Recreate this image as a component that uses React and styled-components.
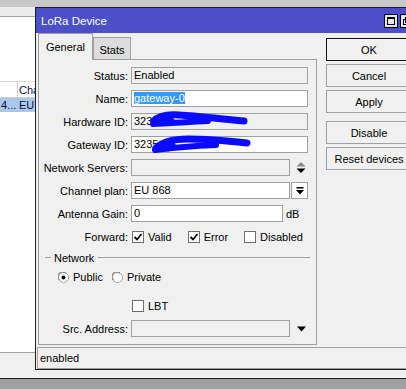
import styled, { createGlobalStyle } from 'styled-components';

const GlobalStyle = createGlobalStyle`
  html, body {
    margin: 0;
    padding: 0;
    background: #a0a0a0;
  }
  body {
    font-family: "Liberation Sans", Arial, sans-serif;
    font-size: 11px;
    color: #000;
  }
`;

/* ---------- background window ---------- */

const Desktop = styled.div`
  position: relative;
  width: 406px;
  height: 389px;
  overflow: hidden;
  display: flex;
  flex-direction: column;
  background: #a0a0a0;
`;

const TopStrip = styled.div`
  height: 7px;
  background: #c8c8c8;
`;

const Toolbar = styled.div`
  height: 9px;
  background: #ececec;
  border-bottom: 1px solid #a0a0a0;
`;

const ListArea = styled.div`
  box-sizing: border-box;
  height: 336px;
  padding-top: 64px;
  background: #fff;
  border-bottom: 1px solid #a0a0a0;
`;

const ListRow = styled.div`
  box-sizing: border-box;
  display: grid;
  grid-template-columns: 18px 1fr;
  height: ${p => (p.$head ? '17px' : '14px')};
  align-items: center;
  background: ${p => (p.$selected ? '#aac8ea' : '#fff')};
  border-top: ${p => (p.$head ? '1px solid #d8d8d8' : 'none')};
  border-bottom: ${p => (p.$head ? '1px solid #d0d0d0' : 'none')};
  color: #101040;
  white-space: nowrap;
  overflow: hidden;
`;

const ListCell = styled.div`
  height: 100%;
  display: flex;
  align-items: center;
  padding-left: ${p => (p.$first ? '0' : '1px')};
  border-right: ${p => (p.$first ? '1px solid #d0d0d0' : 'none')};
  overflow: hidden;
`;

const Footer = styled.div`
  height: 25px;
  background: #f0f0f0;
  border-bottom: 1px solid #222;
`;

/* ---------- dialog ---------- */

const Dialog = styled.div`
  position: absolute;
  left: 35px;
  top: 7px;
  width: 381px;
  height: 363px;
  box-sizing: border-box;
  border: 1px solid #1e1e1e;
  background: #f0f0f0;
  display: flex;
  flex-direction: column;
`;

const TitleBar = styled.div`
  height: 25px;
  flex: none;
  display: flex;
  align-items: center;
  padding: 0 1px 0 5px;
  background: #4b4fc9;
  color: #fff;
  font-size: 11.5px;
`;

const TitleButtons = styled.div`
  margin-left: auto;
  display: flex;
  gap: 2px;
`;

const TitleButton = styled.div`
  box-sizing: border-box;
  width: 14px;
  height: 14px;
  border: 1px solid #000;
  background: #e6e6e6;
  display: flex;
  align-items: center;
  justify-content: center;
`;

const Body = styled.div`
  flex: 1;
  display: flex;
  padding-left: 2px;
`;

const LeftCol = styled.div`
  width: 279px;
  display: flex;
  flex-direction: column;
`;

const TabRow = styled.div`
  height: 27px;
  display: flex;
  align-items: flex-end;
  margin-bottom: -1px;
  position: relative;
  z-index: 1;
`;

const Tab = styled.div`
  box-sizing: border-box;
  width: ${p => p.$w}px;
  height: ${p => (p.$active ? '27px' : '22px')};
  margin-bottom: ${p => (p.$active ? '0' : '1px')};
  padding-top: ${p => (p.$active ? '0' : '2px')};
  display: flex;
  align-items: center;
  justify-content: center;
  border: 1px solid #a0a0a0;
  border-bottom: none;
  background: ${p => (p.$active ? '#f0f0f0' : '#dcdcdc')};
`;

const Panel = styled.div`
  position: relative;
  box-sizing: border-box;
  height: 286px;
  padding-top: 7px;
  border: 1px solid #a0a0a0;
  background: #f0f0f0;
`;

const Row = styled.div`
  display: grid;
  grid-template-columns: 89px auto;
  column-gap: 3px;
  height: ${p => p.$h || 17}px;
  margin-top: ${p => p.$mt || 0}px;
  align-items: center;
`;

const Label = styled.div`
  text-align: right;
  white-space: nowrap;
`;

const FieldLine = styled.div`
  display: flex;
  align-items: center;
  height: 100%;
`;

const Field = styled.div`
  box-sizing: border-box;
  width: ${p => p.$w || 177}px;
  height: 17px;
  padding: 0 2px;
  border: 1px solid #a0a0a0;
  background: ${p => (p.$ro ? '#f0f0f0' : '#fff')};
  line-height: 15px;
  white-space: nowrap;
  overflow: hidden;
`;

const Selected = styled.span`
  background: #3399ff;
  color: #fff;
`;

const DropButton = styled.div`
  box-sizing: border-box;
  width: 17px;
  height: 17px;
  margin-left: 1px;
  border: 1px solid #a0a0a0;
  background: #fbfbfb;
  display: flex;
  align-items: center;
  justify-content: center;
`;

const Glyph = styled.div`
  margin-left: ${p => p.$ml || 0}px;
  display: flex;
  align-items: center;
`;

const Unit = styled.span`
  margin-left: 3px;
`;

const CheckGroup = styled.div`
  display: flex;
  align-items: center;
  gap: 16px;
  margin-left: 1px;
`;

const CheckItem = styled.label`
  display: flex;
  align-items: center;
  gap: 4px;
`;

const Box = styled.span`
  box-sizing: border-box;
  width: 12px;
  height: 12px;
  border: 1px solid #6e6e6e;
  background: #fff;
  display: flex;
  align-items: center;
  justify-content: center;
`;

const GroupHeader = styled.div`
  display: flex;
  align-items: center;
  height: 13px;
  margin: 6px 6px 0 6px;
`;

const Rule = styled.div`
  height: 1px;
  background: #a0a0a0;
  width: ${p => (p.$w ? `${p.$w}px` : 'auto')};
  flex: ${p => (p.$w ? 'none' : '1')};
`;

const GroupTitle = styled.span`
  margin: 0 4px 0 3px;
`;

const RadioRow = styled.div`
  display: flex;
  align-items: center;
  gap: 9px;
  height: 14px;
  margin-top: 6px;
  padding-left: 19px;
`;

const RadioItem = styled.label`
  display: flex;
  align-items: center;
  gap: 4px;
`;

const Scribble = styled.svg`
  position: absolute;
  left: 0;
  top: 0;
  width: 100%;
  height: 100%;
  pointer-events: none;
`;

const ButtonCol = styled.div`
  width: 86px;
  margin-left: 9px;
  padding-top: 5px;
  display: flex;
  flex-direction: column;
`;

const Button = styled.div`
  box-sizing: border-box;
  height: 23px;
  margin-top: ${p => p.$mt || 0}px;
  border: 1px solid ${p => (p.$default ? '#111' : '#a0a0a0')};
  background: #f0f0f0;
  display: flex;
  align-items: center;
  justify-content: center;
  white-space: nowrap;
`;

const StatusBar = styled.div`
  box-sizing: border-box;
  height: 22px;
  flex: none;
  margin-left: 1px;
  padding-left: 2px;
  border: 1px solid #a0a0a0;
  border-right: none;
  display: flex;
  align-items: center;
`;

/* ---------- small drawings ---------- */

const Check = () => (
  <svg width="10" height="10" viewBox="0 0 10 10">
    <polyline points="1.5,5 4,7.5 8.5,2" fill="none" stroke="#000" strokeWidth="1.8" />
  </svg>
);

const CheckBox = ({ checked }) => <Box>{checked && <Check />}</Box>;

const Radio = ({ checked }) => (
  <svg width="11" height="11" viewBox="0 0 11 11">
    <circle cx="5.5" cy="5.5" r="5" fill="#fff" stroke="#a0a0a0" />
    <path d="M1.2 8 A4.6 4.6 0 0 1 8 1.2" fill="none" stroke="#6a6a6a" />
    {checked && <circle cx="5.5" cy="5.5" r="2" fill="#000" />}
  </svg>
);

const Spin = () => (
  <svg width="10" height="12" viewBox="0 0 10 12">
    <polygon points="5,0 9.5,4.5 0.5,4.5" fill="#8a8a8a" />
    <polygon points="0.5,6.5 9.5,6.5 5,11" fill="#000" />
  </svg>
);

const DownToLine = () => (
  <svg width="8" height="8" viewBox="0 0 8 8">
    <rect x="0.5" y="0" width="7" height="1.5" fill="#000" />
    <polygon points="0,3 8,3 4,7.5" fill="#000" />
  </svg>
);

const Caret = () => (
  <svg width="9" height="6" viewBox="0 0 9 6">
    <polygon points="0,0.5 9,0.5 4.5,5.5" fill="#000" />
  </svg>
);

const Maximize = () => (
  <svg width="10" height="10" viewBox="0 0 10 10">
    <rect x="1.5" y="1.5" width="7" height="7" fill="none" stroke="#000" />
    <rect x="1.5" y="1.5" width="7" height="1.5" fill="#000" />
  </svg>
);

const Restore = () => (
  <svg width="10" height="10" viewBox="0 0 10 10">
    <rect x="1.5" y="3.5" width="5" height="5" fill="none" stroke="#000" />
    <rect x="3.5" y="1.5" width="5" height="5" fill="none" stroke="#000" />
  </svg>
);

export default function App() {
  return (
    <>
      <GlobalStyle />
      <Desktop>
        <TopStrip />
        <Toolbar />
        <ListArea>
          <ListRow $head>
            <ListCell $first />
            <ListCell>Cha</ListCell>
          </ListRow>
          <ListRow $selected>
            <ListCell>4...</ListCell>
            <ListCell>EU</ListCell>
          </ListRow>
        </ListArea>
        <Footer />

        <Dialog>
          <TitleBar>
            LoRa Device
            <TitleButtons>
              <TitleButton><Maximize /></TitleButton>
              <TitleButton><Restore /></TitleButton>
            </TitleButtons>
          </TitleBar>

          <Body>
            <LeftCol>
              <TabRow>
                <Tab $active $w={55}>General</Tab>
                <Tab $w={38}>Stats</Tab>
              </TabRow>
              <Panel>
                <Row>
                  <Label>Status:</Label>
                  <FieldLine><Field $ro>Enabled</Field></FieldLine>
                </Row>
                <Row $mt={6}>
                  <Label>Name:</Label>
                  <FieldLine><Field><Selected>gateway-0</Selected></Field></FieldLine>
                </Row>
                <Row $mt={6}>
                  <Label>Hardware ID:</Label>
                  <FieldLine><Field $ro>3235</Field></FieldLine>
                </Row>
                <Row $mt={6}>
                  <Label>Gateway ID:</Label>
                  <FieldLine><Field>3235</Field></FieldLine>
                </Row>
                <Row $mt={6}>
                  <Label>Network Servers:</Label>
                  <FieldLine>
                    <Field $ro $w={159} />
                    <Glyph $ml={6}><Spin /></Glyph>
                  </FieldLine>
                </Row>
                <Row $mt={6}>
                  <Label>Channel plan:</Label>
                  <FieldLine>
                    <Field $w={159}>EU 868</Field>
                    <DropButton><DownToLine /></DropButton>
                  </FieldLine>
                </Row>
                <Row $mt={6}>
                  <Label>Antenna Gain:</Label>
                  <FieldLine>
                    <Field $w={152}>0</Field>
                    <Unit>dB</Unit>
                  </FieldLine>
                </Row>
                <Row $mt={6}>
                  <Label>Forward:</Label>
                  <CheckGroup>
                    <CheckItem><CheckBox checked />Valid</CheckItem>
                    <CheckItem><CheckBox checked />Error</CheckItem>
                    <CheckItem><CheckBox />Disabled</CheckItem>
                  </CheckGroup>
                </Row>

                <GroupHeader>
                  <Rule $w={6} />
                  <GroupTitle>Network</GroupTitle>
                  <Rule />
                </GroupHeader>
                <RadioRow>
                  <RadioItem><Radio checked />Public</RadioItem>
                  <RadioItem><Radio />Private</RadioItem>
                </RadioRow>
                <Row $mt={15} $h={14}>
                  <Label />
                  <CheckGroup>
                    <CheckItem><CheckBox />LBT</CheckItem>
                  </CheckGroup>
                </Row>
                <Row $mt={7}>
                  <Label>Src. Address:</Label>
                  <FieldLine>
                    <Field $ro $w={159} />
                    <Glyph $ml={7}><Caret /></Glyph>
                  </FieldLine>
                </Row>

                {/* blue marker redaction over the IDs */}
                <Scribble>
                  <g transform="translate(-39,-60)" fill="none" stroke="#0a0aff" strokeLinecap="round">
                    <path strokeWidth="7" d="M154 121 C 158 116, 168 114, 180 115 C 198 116, 220 119, 244 121" />
                    <path strokeWidth="6" d="M153 124 C 166 124, 186 122, 208 121" />
                    <path strokeWidth="7" d="M156 148 C 162 142, 172 139, 188 139 C 208 139, 228 141, 247 143" />
                    <path strokeWidth="6" d="M155 150 C 170 148, 190 146, 216 145" />
                  </g>
                  <g transform="translate(-39,-60)" fill="#0a0aff">
                    <ellipse cx="165" cy="121" rx="10" ry="5" />
                    <ellipse cx="166" cy="146" rx="10" ry="5.5" />
                  </g>
                </Scribble>
              </Panel>
            </LeftCol>

            <ButtonCol>
              <Button $default>OK</Button>
              <Button $mt={3}>Cancel</Button>
              <Button $mt={3}>Apply</Button>
              <Button $mt={8}>Disable</Button>
              <Button $mt={3}>Reset devices</Button>
            </ButtonCol>
          </Body>

          <StatusBar>enabled</StatusBar>
        </Dialog>
      </Desktop>
    </>
  );
}
